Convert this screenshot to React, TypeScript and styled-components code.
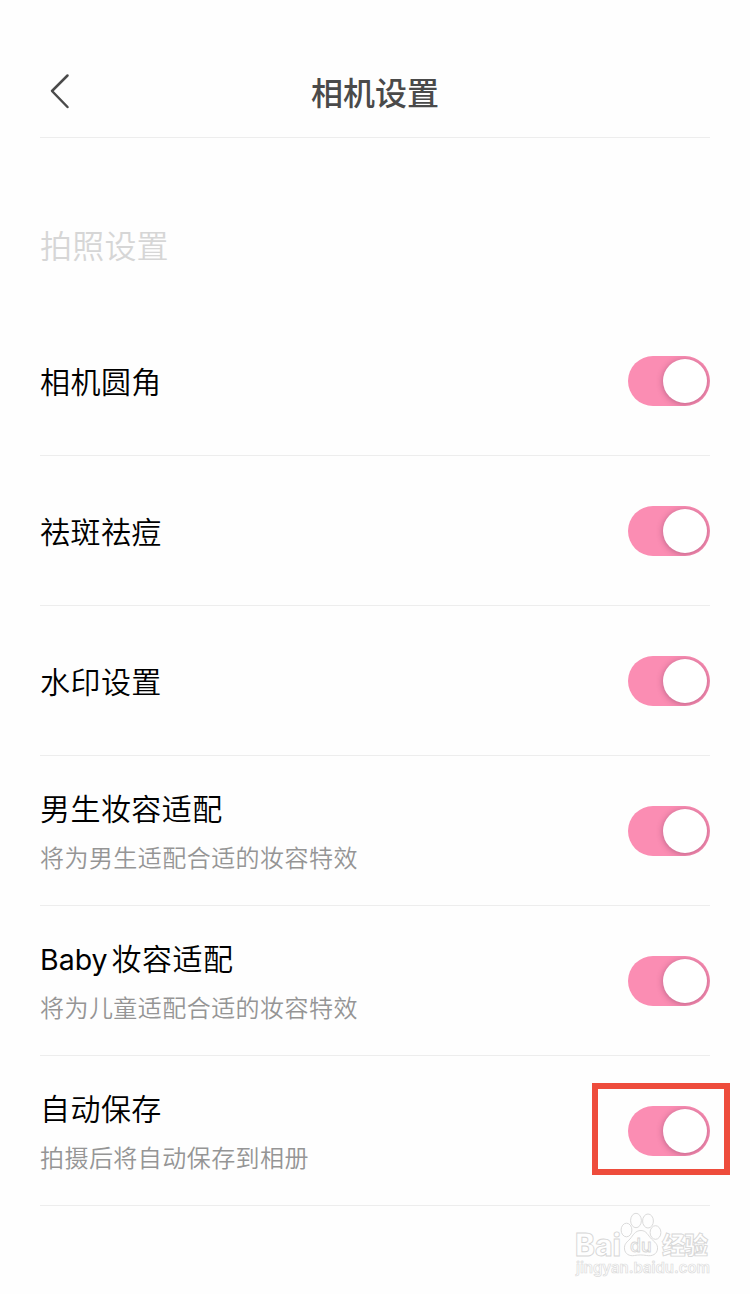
import React, { useState } from 'react';
import styled, { createGlobalStyle } from 'styled-components';

const GlobalStyle = createGlobalStyle`
  * { box-sizing: border-box; }
  body {
    margin: 0;
    background: #fefefe;
    font-family: "Noto Sans CJK SC", sans-serif;
  }
`;

const Page = styled.main`
  position: relative;
  width: 750px;
  height: 1294px;
  padding: 0 40px;
  overflow: hidden;
  background: #fefefe;
`;

const Header = styled.header`
  display: grid;
  grid-template-columns: 40px 1fr 40px;
  align-items: center;
  height: 138px;
  padding-top: 45px;
  border-bottom: 1px solid #ededed;
`;

const BackButton = styled.button`
  display: flex;
  padding: 0;
  border: 0;
  background: none;
`;

const Title = styled.h1`
  margin: 0;
  font-size: 32px;
  line-height: 48px;
  font-weight: 500;
  text-align: center;
  color: #4a4a4a;
`;

const SectionTitle = styled.h2`
  display: flex;
  align-items: center;
  height: 168px;
  margin: 0;
  padding-top: 44px;
  font-size: 32px;
  font-weight: 350;
  line-height: 48px;
  letter-spacing: 0.2px;
  color: #d6d6d6;
`;

const Row = styled.section`
  display: flex;
  align-items: center;
  justify-content: space-between;
  height: 150px;
  border-bottom: 1px solid #ededed;
`;

const Copy = styled.div<{ $single: boolean }>`
  display: flex;
  flex-direction: column;
  gap: 8px;
  padding-top: ${(p) => (p.$single ? '2px' : '0')};
`;

const Label = styled.span`
  display: block;
  height: 44px;
  font-family: Inter, "Noto Sans CJK SC", sans-serif;
  font-size: 30px;
  line-height: 44px;
  font-weight: 350;
  letter-spacing: 0.45px;
  color: #000;
`;

const Latin = styled.span`
  margin-right: 4px;
  font-size: 28.5px;
  font-weight: 400;
  line-height: 0;
  letter-spacing: 0;
`;

const Description = styled.span`
  font-size: 24px;
  line-height: 36px;
  font-weight: 350;
  letter-spacing: 0.45px;
  color: #959595;
`;

const Switch = styled.button<{ $on: boolean }>`
  display: flex;
  justify-content: ${(p) => (p.$on ? 'flex-end' : 'flex-start')};
  align-items: center;
  width: 82px;
  height: 50px;
  padding: 0 3px;
  border: 0;
  border-radius: 25px;
  overflow: hidden;
  background: ${(p) => (p.$on ? '#fb8db3' : '#ddd')};
`;

const Knob = styled.span`
  width: 44px;
  height: 44px;
  border-radius: 50%;
  background: #fff;
  box-shadow: 0 1px 6px rgba(80, 30, 60, 0.38);
`;

const Highlight = styled.div`
  position: absolute;
  left: 592px;
  top: 1083px;
  width: 138px;
  height: 92px;
  border: 6px solid #ee4c3c;
  pointer-events: none;
`;

const Watermark = styled.svg`
  position: absolute;
  left: 565px;
  top: 1205px;
  pointer-events: none;
`;

const items = [
  { label: '相机圆角' },
  { label: '祛斑祛痘' },
  { label: '水印设置' },
  { label: '男生妆容适配', description: '将为男生适配合适的妆容特效' },
  { latin: 'Baby', label: '妆容适配', description: '将为儿童适配合适的妆容特效' },
  { label: '自动保存', description: '拍摄后将自动保存到相册' },
];

function SettingRow({ latin, label, description }: { latin?: string; label: string; description?: string }) {
  const [on, setOn] = useState(true);
  return (
    <Row>
      <Copy $single={!description}>
        <Label>
          {latin && <Latin>{latin}</Latin>}
          {label}
        </Label>
        {description && <Description>{description}</Description>}
      </Copy>
      <Switch $on={on} role="switch" aria-checked={on} onClick={() => setOn(!on)}>
        <Knob />
      </Switch>
    </Row>
  );
}

export default function App() {
  return (
    <>
      <GlobalStyle />
      <Page>
        <Header>
          <BackButton>
            <svg width="40" height="40" viewBox="0 0 40 40" fill="none">
              <path d="M27.500 4.500 12 20l15.500 16" stroke="#4a4a4a" strokeWidth="2.500" strokeLinecap="round" strokeLinejoin="round" />
            </svg>
          </BackButton>
          <Title>相机设置</Title>
        </Header>
        <SectionTitle>拍照设置</SectionTitle>
        {items.map((item) => (
          <SettingRow key={item.label + (item.latin ?? '')} {...item} />
        ))}
        <Highlight />
        <Watermark width="160" height="80" viewBox="0 0 160 80" fill="#fefefe" stroke="#d6d6d6" strokeWidth="0.900">
          <g fontFamily="Inter, sans-serif" fontWeight="800">
            <text x="10" y="50.500" fontSize="31" textLength="46" lengthAdjust="spacingAndGlyphs">Bai</text>
            <ellipse cx="61.500" cy="25" rx="5.400" ry="6.800" />
            <ellipse cx="71" cy="15.500" rx="5.400" ry="7.200" />
            <ellipse cx="83" cy="16" rx="5.400" ry="7" />
            <ellipse cx="90.500" cy="27.500" rx="5.400" ry="6.800" />
            <path d="M76 25.500c-6 0-8 5-11 8.500-3 3-6 5-5.500 10 .5 5 5 7.500 10 6.500 4-.7 8-.7 12 0 6 1 10.500-1.500 11-6.500.5-5-3-7-6-10-3.500-3.500-5-8.500-10.500-8.500z" />
            <text x="65" y="46.700" fontSize="18" fontWeight="500" textLength="21.500" lengthAdjust="spacingAndGlyphs">du</text>
            <text x="97" y="48.500" fontSize="23.500" fontFamily="Noto Sans CJK SC, sans-serif" textLength="46">经验</text>
            <text x="11" y="67.500" fontSize="15" fontWeight="600" strokeWidth="0.700" stroke="#dcdcdc" textLength="134" lengthAdjust="spacingAndGlyphs">jingyan.baidu.com</text>
          </g>
        </Watermark>
      </Page>
    </>
  );
}
